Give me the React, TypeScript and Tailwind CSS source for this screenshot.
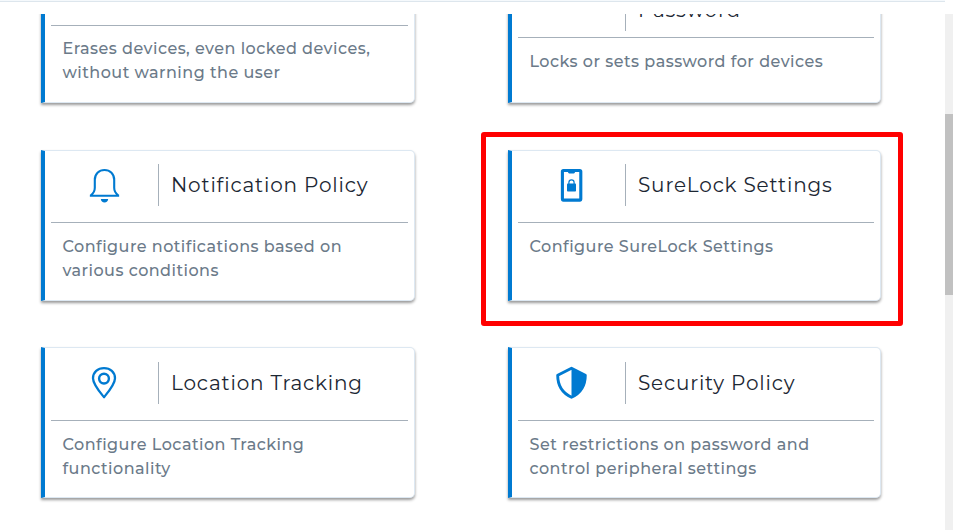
import { type ReactNode } from 'react'

interface CardProps {
  icon?: ReactNode
  title: string
  lines: string[]
  width?: string
  header?: string
}

const BellIcon = () => (
  <svg width="32" height="36" viewBox="-0.5 -0.8 32 36" fill="none">
    <path
      d="M16 2.2C10.3 2.2 6.3 6.4 6.3 12V20C6.3 23.4 5.2 25.4 2.4 27.5V28H29.6V27.5C26.8 25.4 25.7 23.4 25.7 20V12C25.7 6.4 21.7 2.2 16 2.2Z"
      stroke="#007ad1"
      strokeWidth="2.1"
    />
    <path d="M12.3 31.2H19.7C19.5 33.3 18.1 34.6 16 34.6S12.5 33.3 12.3 31.2Z" fill="#007ad1" />
  </svg>
)

const PhoneLockIcon = () => (
  <svg width="32" height="36" viewBox="-0.5 -0.5 32 36" fill="none">
    <rect x="6.9" y="3" width="18.4" height="29.6" rx="1" stroke="#007ad1" strokeWidth="3.1" />
    <path d="M12.5 3H19.5V4.6Q19.5 6 18.2 6H13.8Q12.5 6 12.5 4.6Z" fill="#007ad1" />
    <path d="M13.4 16.5V15C13.4 11.5 18.6 11.5 18.6 15V16.5" stroke="#007ad1" strokeWidth="1.2" />
    <rect x="11.5" y="16" width="9" height="8" rx="0.8" fill="#007ad1" />
  </svg>
)

const PinIcon = () => (
  <svg width="32" height="36" viewBox="0 0 32 36" fill="none" stroke="#007ad1">
    <path
      d="M16 32.2C11.5 26.7 5 19.2 5 13.2C5 7 9.8 3.1 16 3.1S27 7 27 13.2C27 19.2 20.5 26.7 16 32.2Z"
      strokeWidth="2.3"
      strokeLinejoin="round"
    />
    <circle cx="16" cy="13.6" r="4.9" strokeWidth="2.4" />
  </svg>
)

const ShieldIcon = () => (
  <svg width="32" height="36" viewBox="-0.5 0 32 36" fill="none">
    <path
      d="M16 3.2L29.8 10.2C29.8 19.8 25.2 28 16 32.2C6.8 28 2.2 19.8 2.2 10.2Z"
      stroke="#007ad1"
      strokeWidth="2.9"
      strokeLinejoin="round"
    />
    <path d="M16 3.2L29.8 10.2C29.8 19.8 25.2 28 16 32.2Z" fill="#007ad1" />
  </svg>
)

const cardStyle =
  'h-[151px] shrink-0 flex flex-col rounded-r-[5px] border border-l-4 border-[#dde8f2] border-l-[#007ad1] bg-white shadow-[0_2px_3px_rgba(0,0,0,0.4)]'

const titleStyle = 'pl-3 text-xl leading-6 font-normal tracking-[0.82px] whitespace-nowrap text-[#1c2733]'

const Description = ({ lines, padding }: { lines: string[]; padding: string }) => (
  <div className={`${padding} pl-[17.5px] text-base leading-6 font-medium tracking-[0.47px] text-[#6b7a89]`}>
    {lines.map((line) => (
      <p key={line} className="whitespace-nowrap">
        {line}
      </p>
    ))}
  </div>
)

function Card({ icon, title, lines, width = 'w-[374px]', header = 'h-[72px] pb-1' }: CardProps) {
  return (
    <article className={`${cardStyle} ${width}`}>
      <header className={`mx-1.5 flex shrink-0 items-center border-b border-[#a6b0ba] ${header}`}>
        <div className="flex h-[42px] w-[108px] items-center justify-center border-r border-[#a6b0ba] pr-px">
          {icon}
        </div>
        <h2 className={titleStyle}>{title}</h2>
      </header>
      <Description lines={lines} padding={icon ? 'pt-3' : 'pt-[11px]'} />
    </article>
  )
}

// Card with a two line title, scrolled partly out of view
function TallCard({ title, lines }: CardProps) {
  return (
    <article className={`${cardStyle} w-[373px]`}>
      <header className="mx-1.5 flex h-[85px] shrink-0 items-end border-b border-[#a6b0ba] pb-1.5">
        <div className="h-[66px] w-[108px] border-r border-[#a6b0ba]" />
        <h2 className={`pb-[9px] ${titleStyle}`}>{title}</h2>
      </header>
      <Description lines={lines} padding="pt-3" />
    </article>
  )
}

export default function App() {
  return (
    <div className="flex h-[530px] w-[953px] flex-col overflow-hidden bg-white font-['Montserrat','Inter',sans-serif]">
      <div className="h-0.5 w-[945px] shrink-0 border-b border-[#dde6ed] bg-[#f5f9fc]" />
      <div className="mt-3 flex min-h-0 flex-1">
        <main className="w-[945px] overflow-hidden pl-[41px]">
          <div className="-ml-2.5 flex h-28 items-end gap-[93px] overflow-hidden pb-[23px] pl-2.5">
            <Card
              header="h-[73px] pb-1"
              title=""
              lines={['Erases devices, even locked devices,', 'without warning the user']}
            />
            <TallCard title="Password" lines={['Locks or sets password for devices']} />
          </div>
          <div className="mt-6 flex gap-[93px]">
            <Card
              icon={<BellIcon />}
              title="Notification Policy"
              lines={['Configure notifications based on', 'various conditions']}
            />
            <div className="-mx-[27px] -mt-[18px] -mb-[25px] h-[194px] w-[422px] shrink-0 rounded-[3px] border-5 border-[#ff0000] pt-[13px] pl-[22px]">
              <Card
                icon={<PhoneLockIcon />}
                width="w-[373px]"
                title="SureLock Settings"
                lines={['Configure SureLock Settings']}
              />
            </div>
          </div>
          <div className="mt-[46px] flex gap-[93px]">
            <Card
              icon={<PinIcon />}
              header="h-[73px] pb-[3px]"
              title="Location Tracking"
              lines={['Configure Location Tracking', 'functionality']}
            />
            <Card
              icon={<ShieldIcon />}
              width="w-[373px]"
              header="h-[73px] pb-[3px]"
              title="Security Policy"
              lines={['Set restrictions on password and', 'control peripheral settings']}
            />
          </div>
        </main>
        <div className="w-2 bg-[#f0f0f0] pt-[100px]">
          <div className="h-[181px] bg-[#c1c1c1]" />
        </div>
      </div>
    </div>
  )
}
